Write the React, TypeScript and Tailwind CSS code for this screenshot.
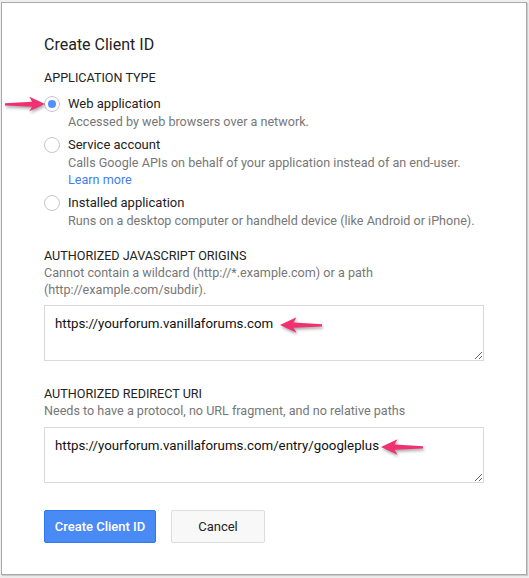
import React from "react";

function Radio({ checked }: { checked?: boolean }) {
  return (
    <span className="flex h-4 w-4 shrink-0 items-center justify-center rounded-full border border-[#c6c6c6] bg-white">
      {checked && <span className="h-[8px] w-[8px] rounded-full bg-[#4d90fe]" />}
    </span>
  );
}

function Arrow({ dir, className }: { dir: "left" | "right"; className: string }) {
  return (
    <svg
      viewBox="0 0 44 20"
      className={className}
      style={{ filter: "drop-shadow(1px 2px 1.5px rgba(0,0,0,0.35))" }}
    >
      <g transform={dir === "left" ? "translate(44,0) scale(-1,1)" : undefined}>
        <path
          d="M1 9.3 L29.5 7.6 L26.5 2.3 L43 10 L26.5 17.7 L29.5 12.8 L1 11.5 Z"
          fill="#f0306f"
        />
      </g>
    </svg>
  );
}

function Option({
  checked,
  label,
  children,
}: {
  checked?: boolean;
  label: string;
  children: React.ReactNode;
}) {
  return (
    <div className="flex gap-2">
      <div className="flex h-[18px] items-center">
        <Radio checked={checked} />
      </div>
      <div>
        <div className="text-[13px] leading-[18px] text-[#222]">{label}</div>
        <div className="whitespace-nowrap text-[12.6px] leading-[17px] text-[#777]">{children}</div>
      </div>
    </div>
  );
}

function Field({ value }: { value: string }) {
  return (
    <textarea
      readOnly
      defaultValue={value}
      className="block h-[56px] w-full border border-[#d9d9d9] bg-white px-[10px] pt-[9px] text-[13.3px] leading-[18px] text-[#111] outline-none font-['Roboto',sans-serif]"
    />
  );
}

export default function App() {
  return (
    <div className="relative h-[578px] w-[529px] overflow-hidden bg-[#efefef] pl-[1px] pt-[2px] font-['Roboto',sans-serif]">
      <div className="h-[573px] w-[526px] border border-[#a9a9a9] bg-white px-[42px] pb-[30px] pt-[32px] shadow-[1px_1px_1px_rgba(0,0,0,0.15)]">
        <h2 className="text-[16px] leading-[20px] text-[#222]">Create Client ID</h2>

        <div className="mt-[15px] text-[12.6px] leading-[16px] text-[#222]">APPLICATION TYPE</div>

        <div className="mt-[9px]">
          <Option checked label="Web application">
            Accessed by web browsers over a network.
          </Option>
        </div>
        <div className="mt-[6px]">
          <Option label="Service account">
            Calls Google APIs on behalf of your application instead of an end-user.
            <br />
            <span className="text-[#427fed]">Learn more</span>
          </Option>
        </div>
        <div className="mt-[6px]">
          <Option label="Installed application">
            Runs on a desktop computer or handheld device (like Android or iPhone).
          </Option>
        </div>

        <div className="mt-[19px] text-[12.6px] leading-[16px] text-[#222]">AUTHORIZED JAVASCRIPT ORIGINS</div>
        <div className="text-[12.6px] leading-[17px] text-[#777]">
          Cannot contain a wildcard (http://*.example.com) or a path
          <br />
          (http://example.com/subdir).
        </div>
        <div className="mt-[7px]">
          <Field value="https://yourforum.vanillaforums.com" />
        </div>

        <div className="mt-[25px] text-[12.6px] leading-[16px] text-[#222]">AUTHORIZED REDIRECT URI</div>
        <div className="text-[12.6px] leading-[17px] text-[#777]">
          Needs to have a protocol, no URL fragment, and no relative paths
        </div>
        <div className="mt-[8px]">
          <Field value="https://yourforum.vanillaforums.com/entry/googleplus" />
        </div>

        <div className="mt-[27px] flex gap-[15px]">
          <button className="h-[33px] w-[112px] rounded-[2px] border border-[#3079ed] bg-[#4a8af4] text-[13px] font-medium text-white">
            Create Client ID
          </button>
          <button className="h-[33px] w-[94px] rounded-[2px] border border-[#dcdcdc] bg-[#f8f8f8] text-[13px] text-[#222]">
            Cancel
          </button>
        </div>
      </div>

      <Arrow dir="right" className="absolute left-[4px] top-[94px] h-[20px] w-[42px]" />
      <Arrow dir="left" className="absolute left-[278px] top-[315px] h-[20px] w-[46px]" />
      <Arrow dir="left" className="absolute left-[380px] top-[437px] h-[20px] w-[44px]" />
    </div>
  );
}
